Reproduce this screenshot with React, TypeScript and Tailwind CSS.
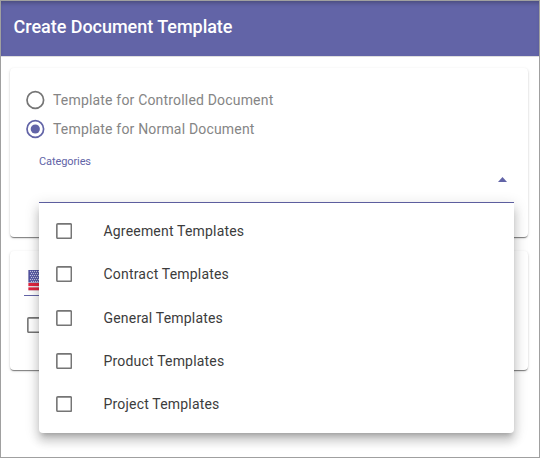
const categories = [
  'Agreement Templates',
  'Contract Templates',
  'General Templates',
  'Product Templates',
  'Project Templates',
];

const cardShadow =
  'shadow-[0_2px_1px_-1px_rgba(0,0,0,0.3),0_1px_1px_0_rgba(0,0,0,0.2),0_1px_3px_0_rgba(0,0,0,0.16)]';

function Checkbox() {
  return (
    <svg width="16" height="16" viewBox="0 0 16 16" className="block shrink-0">
      <rect x="0.85" y="0.85" width="14.5" height="14.5" rx="1" fill="none" stroke="#757575" strokeWidth="1.6" />
    </svg>
  );
}

function Radio({ label, checked }: { label: string; checked?: boolean }) {
  return (
    <label className="flex h-[29px] items-center">
      <svg width="20" height="20" viewBox="0 0 20 20" className={checked ? 'text-[#6264a7]' : 'text-[#757575]'}>
        <circle cx="10.3" cy="10" r="8.3" fill="none" stroke="currentColor" strokeWidth="1.7" />
        {checked && <circle cx="10.3" cy="10" r="4.6" fill="currentColor" />}
      </svg>
      <span className="ml-2 whitespace-nowrap text-[14px] leading-5 tracking-[0.18px] text-[#858585]">{label}</span>
    </label>
  );
}

function Flag() {
  return (
    <svg width="28" height="21" viewBox="0 0 28 21" className="block">
      <rect x="0.4" width="27.6" height="21" fill="#e9dfe6" />
      {[0, 4, 8].map((y) => (
        <rect key={y} x="14" y={y} width="14" height="2.6" fill="#e0243f" />
      ))}
      <rect x="0.4" y="13" width="27.6" height="3" fill="#e0243f" />
      <rect x="0.4" y="17.4" width="27.6" height="2.8" fill="#e0243f" />
      <rect x="0.4" width="14" height="12.4" fill="#5153a0" />
      {Array.from({ length: 30 }, (_, i) => (
        <circle key={i} cx={2.5 + (i % 5) * 2 + (Math.floor(i / 5) % 2)} cy={1.5 + Math.floor(i / 5) * 2} r="0.65" fill="#c6c7e6" />
      ))}
    </svg>
  );
}

function CategoryMenu() {
  return (
    <div className="absolute top-[calc(100%+1px)] left-0 z-10 h-[230px] w-[475px] rounded-b bg-white pt-[6.8px] shadow-[0_5px_5px_-3px_rgba(0,0,0,0.2),0_8px_10px_1px_rgba(0,0,0,0.14),0_3px_14px_2px_rgba(0,0,0,0.12)]">
      {categories.map((name) => (
        <div key={name} className="flex h-[43.1px] items-center pl-[17px]">
          <Checkbox />
          <span className="ml-[31.5px] text-[14px] leading-5 tracking-[0.19px] text-[#3c3c3c]">{name}</span>
        </div>
      ))}
    </div>
  );
}

export default function App() {
  return (
    <div className="h-[458px] w-[540px] overflow-hidden border border-[#a0a0a0] bg-white font-[Roboto,sans-serif]">
      <header className="flex h-14 items-center border-b border-[#dedede] bg-[#6264a7] pb-[3px] pl-[12.5px] shadow-[inset_0_4px_4px_-2px_rgba(0,0,0,0.25)]">
        <h1 className="text-[18px] font-medium leading-6 tracking-[-0.03px] text-white">Create Document Template</h1>
      </header>
      <main className="flex flex-col gap-[14px] pt-[11px] pr-[11px] pl-[9px]">
        <section className={`h-[169px] rounded bg-white pt-[17px] pl-[15px] ${cardShadow}`}>
          <Radio label="Template for Controlled Document" />
          <Radio label="Template for Normal Document" checked />
          <div className="relative ml-[14px] h-[60px] w-[475px] border-b border-[#6264a7]">
            <div className="pt-[11px] text-[11px] leading-4 tracking-[-0.1px] text-[#6264a7]">Categories</div>
            <div className="flex justify-end pt-[7px] pr-[7px]">
              <svg width="9" height="5" viewBox="0 0 9 5" className="text-[#6264a7]">
                <path d="M0 5 4.5 0 9 5Z" fill="currentColor" />
              </svg>
            </div>
            <CategoryMenu />
          </div>
        </section>
        <section className={`h-[119px] rounded bg-white pt-[19px] pl-[14px] ${cardShadow}`}>
          <div className="w-[490px] border-b border-[#6264a7] pb-[4px] pl-1">
            <Flag />
          </div>
          <div className="pt-[21px] pl-[3px]">
            <Checkbox />
          </div>
        </section>
      </main>
    </div>
  );
}
